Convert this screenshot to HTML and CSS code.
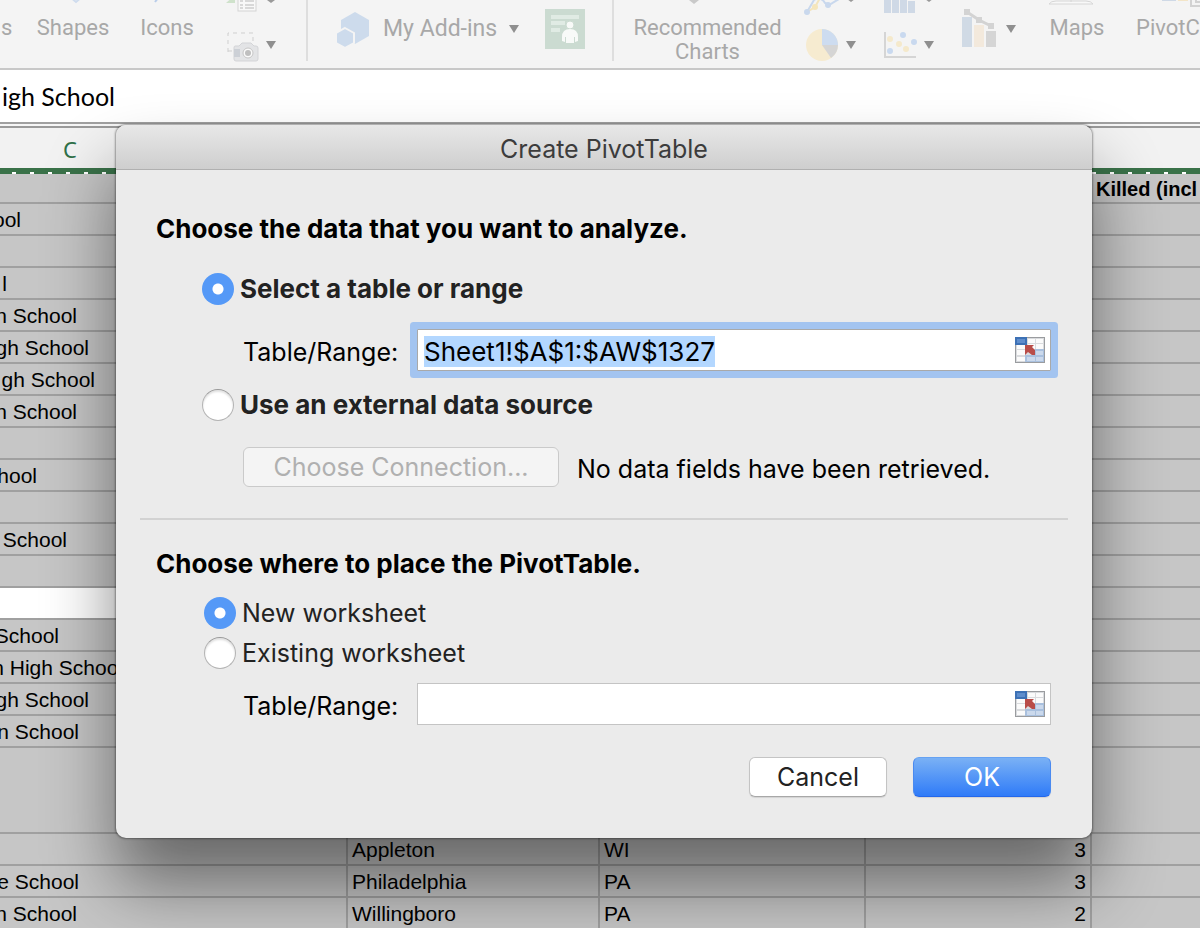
FILE: index.html
```html
<!DOCTYPE html>
<html lang="en">
<head>
<meta charset="utf-8">
<title>Create PivotTable</title>
<link rel="stylesheet" href="styles.css">
</head>
<body>
<svg class="defs" aria-hidden="true">
  <symbol id="picker" viewBox="0 0 30 26">
    <rect width="30" height="26" fill="#9a9c9f"/>
    <rect x="1" y="1" width="28" height="24" fill="#d9dbde"/>
    <path d="M2 8h9v4H2zM2 13h8v5H2zM2 20h8v4H2zM13 2h7v4h-7zM21 2h7v4h-7zM13 7h7v5h-7zM21 7h7v5h-7z" fill="#fbfbfb"/>
    <path d="M20 12h9v13H10v-7h10z" fill="#a9c0de"/>
    <path d="M21 14h7v4h-7zM12 20h8v4h-8zM21 20h7v4h-7z" fill="#cbd9ec"/>
    <rect width="12" height="8" fill="#3d71b5"/>
    <rect x="2" y="2" width="8" height="4" fill="#5e8dcc"/>
    <path d="M10 8h9l-2 2 3 3v5h-3l-4-3-3 3z" fill="#b94d49"/>
  </symbol>
</svg>
<div class="app">
  <header class="ribbon">
    <div class="tool start"><svg class="cap" viewBox="0 0 24 16"></svg>s</div>
    <button class="tool"><svg class="cap" viewBox="0 0 98 16"><path d="M45-4l7 6 7-6" fill="none" stroke="#cfdcee" stroke-width="2"/></svg>Shapes</button>
    <button class="tool"><svg class="cap" viewBox="0 0 90 16"><path d="M36-2l-3 4" stroke="#b9cdea" stroke-width="2"/></svg>Icons</button>
    <div class="shots">
      <svg viewBox="0 0 94 68" width="94" height="68">
        <path d="M14 3l9-8v8z" fill="#cfe2cb"/>
        <rect x="26" y="-8" width="18" height="19" fill="#f8f8f8" stroke="#d4d4d4"/>
        <path d="M28 1h3M28 5h3M28 8h3M33 1h9M33 5h9M33 8h9" stroke="#d8d8d8" stroke-width="2"/>
        <path d="M55 0h8l-4 3z" fill="#999"/>
        <path d="M16 52V33h25v10M16 51h6" fill="none" stroke="#cfcfcf" stroke-width="1" stroke-dasharray="4 4"/>
        <path d="M23 46h4l3-3h9l3 3h2q2 0 2 2v11q0 2-2 2H24q-2 0-2-2V48q0-2 1-2z" fill="#e3e4e6" stroke="#d3d4d7"/>
        <rect x="22" y="49" width="6" height="8" fill="#ccd0d6"/>
        <circle cx="36" cy="53" r="5" fill="#fafafa" stroke="#c6c6c6"/><circle cx="36" cy="53" r="3" fill="#bfbfbf"/>
        <path d="M54 41h10l-5 8z" fill="#8f8f8f"/>
      </svg>
    </div>
    <div class="addins">
      <button class="myaddins">
        <svg viewBox="0 0 34 36" width="34" height="36"><path d="M18 1l14 8v16l-14 8-14-8V9z" fill="#cddbec"/><path d="M8 17l9 5v10l-9 5-9-5V22z" fill="#cddbec" stroke="#f4f4f4" stroke-width="2"/></svg>
        <span>My Add-ins</span>
        <svg viewBox="0 0 10 8" width="10" height="8"><path d="M0 0h10L5 8z" fill="#8f8f8f"/></svg>
      </button>
      <button class="people" aria-label="People Graph">
        <svg viewBox="0 0 40 40" width="40" height="40"><rect width="40" height="40" fill="#cbdbd1"/><path d="M6 8h28M6 14h14M6 21h9" stroke="#e0ebe4" stroke-width="4"/><circle cx="25" cy="16" r="4" fill="#f8faf8" stroke="#cbdbd1"/><path d="M17 32v-4q0-8 8-8t8 8v4l-3 1v-5h-1v6h-8v-6h-1v5z" fill="#f8faf8"/></svg>
      </button>
    </div>
    <button class="tool divided"><svg class="cap" viewBox="0 0 187 16"><path d="M75 0h10l-5 4z" fill="#c9c9c9"/></svg>Recommended<br>Charts</button>
    <div><svg viewBox="0 0 74 68" width="74" height="68">
      <path d="M6 12l8-5 5-9" stroke="#f3e5bd" stroke-width="2" fill="none"/><circle cx="14" cy="7" r="3" fill="#f5e6bc"/>
      <path d="M6 12l7-12q7-4 11 3l4 2 10-6" fill="none" stroke="#c9d8ed" stroke-width="2"/><circle cx="6" cy="12" r="3" fill="#c9d8ed"/><circle cx="27" cy="5" r="3" fill="#c9d8ed"/>
      <path d="M46-1h8l-4 3z" fill="#999"/>
      <circle cx="21" cy="45" r="16" fill="#f6ebd0"/><path d="M21 45V29a16 16 0 0 1 16 16z" fill="#cddcf0"/><path d="M21 45h16a16 16 0 0 1-7 13z" fill="#d5d5d5"/>
      <path d="M45 41h10l-5 8z" fill="#8f8f8f"/></svg></div>
    <div><svg viewBox="0 0 78 68" width="78" height="68">
      <path d="M9 0h7v13H9zM17 0h7v13h-7zM25 0h7v13h-7zM33 1h7v12h-7z" fill="#cfd9e6"/>
      <path d="M50-1h8l-4 3z" fill="#999"/>
      <path d="M10 32v25h31" fill="none" stroke="#d5d5d5" stroke-width="2"/>
      <g fill="#f5e9cb"><circle cx="15" cy="39" r="3"/><circle cx="24" cy="44" r="3"/><circle cx="31" cy="49" r="3"/></g>
      <g fill="#c9d9ef"><circle cx="28" cy="35" r="3"/><circle cx="39" cy="42" r="3"/><circle cx="15" cy="51" r="3"/></g>
      <path d="M49 41h10l-5 8z" fill="#8f8f8f"/></svg></div>
    <div><svg viewBox="0 0 78 68" width="78" height="68">
      <path d="M9 17h10v30H9z" fill="#d0dae5"/><path d="M21 25h10v22H21z" fill="#f3e9dc"/><path d="M33 31h10v16H33z" fill="#d5d5d5"/>
      <path d="M14 12l12 8 12 6" fill="none" stroke="#d3d3d3" stroke-width="3"/><path d="M11 9h6v6h-6zM23 17h6v6h-6zM35 23h6v6h-6z" fill="#d3d3d3"/>
      <path d="M53 25h10l-5 8z" fill="#8f8f8f"/></svg></div>
    <button class="tool"><svg class="cap" viewBox="0 0 92 16"><path d="M18 4q2-3 7-3h30q5 0 7 3zM40-1v3" fill="#f8f8f8" stroke="#d6d6d6"/></svg>Maps</button>
    <button class="tool start last"><svg class="cap" viewBox="0 0 64 16"><path d="M26 0h14v1H26z" fill="#cfd9e6"/><path d="M42 0h10v1H42z" fill="#f3e5c8"/><path d="M55-2v8h9M60-2v4h4" fill="none" stroke="#d2d2d2" stroke-width="2"/></svg>PivotC</button>
  </header>
  <div class="formula">igh School</div>
  <div class="colhead"><span>C</span></div>
  <div class="ants"></div>
  <table class="sheet">
    <colgroup><col class="c1"><col class="c2"><col class="c3"><col class="c4"><col></colgroup>
    <tr class="first"><td colspan="4"></td><th>Killed (incl</th></tr>
    <tr><td colspan="4"><div class="name e20">ool</div></td><td></td></tr>
    <tr><td colspan="4"></td><td></td></tr>
    <tr><td colspan="4"><div class="name e6">l</div></td><td></td></tr>
    <tr><td colspan="4"><div class="name e76">n School</div></td><td></td></tr>
    <tr><td colspan="4"><div class="name e88">gh School</div></td><td></td></tr>
    <tr><td colspan="4"><div class="name e94">gh School</div></td><td></td></tr>
    <tr><td colspan="4"><div class="name e76">n School</div></td><td></td></tr>
    <tr><td colspan="4"></td><td></td></tr>
    <tr><td colspan="4"><div class="name e36">hool</div></td><td></td></tr>
    <tr><td colspan="4"></td><td></td></tr>
    <tr><td colspan="4"><div class="name e66">School</div></td><td></td></tr>
    <tr><td colspan="4"></td><td></td></tr>
    <tr><td colspan="4" class="active"></td><td></td></tr>
    <tr><td colspan="4"><div class="name e58">School</div></td><td></td></tr>
    <tr><td colspan="4"><div class="name e122">n High School</div></td><td></td></tr>
    <tr><td colspan="4"><div class="name e88">gh School</div></td><td></td></tr>
    <tr><td colspan="4"><div class="name e78">n School</div></td><td></td></tr>
    <tr class="tall"><td colspan="4"></td><td></td></tr>
    <tr class="full"><td></td><td>Appleton</td><td>WI</td><td class="num">3</td><td></td></tr>
    <tr class="full"><td><div class="name e78">e School</div></td><td>Philadelphia</td><td>PA</td><td class="num">3</td><td></td></tr>
    <tr class="full"><td><div class="name e76">n School</div></td><td>Willingboro</td><td>PA</td><td class="num">2</td><td></td></tr>
  </table>
</div>

<form class="dialog" role="dialog" aria-labelledby="title">
  <h1 class="titlebar" id="title">Create PivotTable</h1>
  <div class="content">
    <h2>Choose the data that you want to analyze.</h2>
    <label class="option source"><input type="radio" name="source" checked>Select a table or range</label>
    <div class="row range-row">
      <label for="range">Table/Range:</label>
      <div class="field focused"><input id="range" type="text" value="Sheet1!$A$1:$AW$1327" spellcheck="false"><button type="button" aria-label="Pick range"><svg width="30" height="26"><use href="#picker"/></svg></button></div>
    </div>
    <label class="option source second"><input type="radio" name="source">Use an external data source</label>
    <div class="row connection">
      <button type="button" class="choose" disabled>Choose Connection...</button>
      <span>No data fields have been retrieved.</span>
    </div>
    <hr>
    <h2>Choose where to place the PivotTable.</h2>
    <div class="places">
      <label class="option"><input type="radio" name="place" checked>New worksheet</label>
      <label class="option"><input type="radio" name="place">Existing worksheet</label>
    </div>
    <div class="row">
      <label for="target">Table/Range:</label>
      <div class="field"><input id="target" type="text"><button type="button" aria-label="Pick location"><svg width="30" height="26"><use href="#picker"/></svg></button></div>
    </div>
    <div class="actions">
      <button type="button" class="push">Cancel</button>
      <button type="button" class="push primary">OK</button>
    </div>
  </div>
</form>
<script src="script.js"></script>
</body>
</html>
```
FILE: styles.css
```css
* { box-sizing: border-box; }
body { margin: 0; height: 100vh; overflow: hidden; position: relative; font-family: Inter, "Liberation Sans", sans-serif; background: #c6c6c6; }
button { font: inherit; color: inherit; background: none; border: 0; padding: 0; margin: 0; }
svg { display: block; }
.defs { display: none; }
.app { height: 100%; overflow: hidden; }

.ribbon { display: grid; grid-template-columns: 24px 98px 90px 94px 306px 189px 74px 78px 78px 92px 1fr; height: 70px; overflow: hidden; background: #f4f4f4; border-bottom: 2px solid #c8c8c8; color: #a8a8a8; font-family: Roboto, sans-serif; font-size: 22px; line-height: 24px; }
.tool { display: block; text-align: center; white-space: nowrap; align-self: start; }
.cap { width: 100%; height: 16px; }
.divided, .addins { border-left: 2px solid #dedede; height: 61px; }
.start { text-align: left; padding-left: 1px; }
.last { padding-left: 13px; }
.last .cap { width: 64px; }
.addins { display: flex; align-items: center; padding: 0 0 4px 29px; gap: 26px; }
.myaddins { display: flex; align-items: center; gap: 12px; white-space: nowrap; font-size: 23px; }

.formula { height: 54px; line-height: 52px; padding-left: 2px; background: #fff; border-bottom: 2px solid #a0a0a0; font-family: Lato, sans-serif; font-size: 25px; }
.colhead { height: 44px; border-top: 2px solid #f6f6f6; background: #f2f2f2; box-shadow: inset 0 2px #9a9a9a; color: #2f7048; font-family: "Noto Sans", sans-serif; font-size: 22px; line-height: 46px; }
.colhead span { display: block; width: 140px; text-align: center; }
.ants { height: 6px; background: linear-gradient(90deg, transparent 12px, #fff 12px, #fff 16px, transparent 16px) 0 4px / 18px 2px repeat-x #3a7249; }

.sheet { width: 100%; table-layout: fixed; border-collapse: separate; border-spacing: 0; font-family: "Liberation Sans", Arial, sans-serif; font-size: 21px; line-height: 28px; }
.c1 { width: 348px; }
.c2 { width: 252px; }
.c3 { width: 266px; }
.c4 { width: 226px; }
.sheet td, .sheet th { height: 32px; padding: 2px 4px 0; border-bottom: 2px solid #a0a0a0; background: #c6c6c6; white-space: nowrap; overflow: hidden; text-align: left; }
.sheet th { font-size: 20px; line-height: 26px; }
.sheet .first td, .sheet .first th { height: 30px; }
.sheet td:first-child { padding: 2px 0 0; }
.sheet .active { background: #fff; }
.sheet .tall td { height: 86px; }
.full td { border-right: 2px solid #a0a0a0; }
.full td:last-child { border-right: 0; }
.sheet .num { text-align: right; }
.name { display: flex; justify-content: flex-end; overflow: hidden; }
.e6 { width: 7px; }
.e20 { width: 21px; }
.e36 { width: 37px; }
.e58 { width: 59px; }
.e66 { width: 67px; }
.e76 { width: 77px; }
.e78 { width: 79px; }
.e88 { width: 89px; }
.e94 { width: 95px; }
.e122 { width: 123px; }

.dialog { position: absolute; top: 125px; left: 116px; right: 108px; background: #ebebeb; border-radius: 10px; box-shadow: 0 0 2px 1px rgba(0,0,0,.35), 0 46px 70px rgba(0,0,0,.48); font-size: 25px; line-height: 34px; color: #000; }
.titlebar { margin: 0; height: 45px; line-height: 48px; font-size: 25px; font-weight: 400; text-align: center; color: #3c3c3c; background: linear-gradient(#e8e8e8, #cecece); border-bottom: 1px solid #b0b0b0; border-radius: 10px 10px 0 0; }
.content { padding: 42px 41px 41px 40px; }
h2 { margin: 0; font-size: 26px; line-height: 34px; font-weight: 700; }
.option { display: flex; align-items: center; gap: 6px; height: 32px; color: #222; }
.option input { appearance: none; width: 32px; height: 32px; margin: 0; border-radius: 50%; background: #fff; border: 1px solid #b4b4b4; border-top-color: #999; box-shadow: inset 0 2px 2px rgba(0,0,0,.12); }
.option input:checked { border: 0; background: radial-gradient(circle, #fff 5px, #5599f7 6px); box-shadow: none; }
.source { margin: 27px 0 24px 46px; font-size: 26px; font-weight: 700; }
.second { margin: 18px 0 26px 46px; }
.row { display: flex; align-items: center; margin-left: 87px; }
.row > label { width: 174px; padding-top: 3px; }
.field { flex: 1; display: flex; align-items: center; height: 42px; padding: 0 5px 0 6px; background: #fff; border: 1px solid #c4c4c4; }
.field input { flex: 1; min-width: 0; height: 36px; border: 0; padding: 3px 0 0; background: none; font: inherit; font-size: 26px; outline: 0; }
.focused { border-color: #a9a9a9; box-shadow: 0 0 0 7px #a3c4f0; border-radius: 1px; }
::selection { background: #b3d7ff; color: #000; }
.choose { width: 316px; height: 40px; background: #f4f4f4; border: 1px solid #cacaca; border-radius: 6px; color: #b0b0b0; }
.connection { gap: 18px; }
.connection span { padding-top: 3px; white-space: nowrap; }
hr { border: 0; height: 2px; background: #d2d2d2; margin: 31px -17px 27px -16px; }
.places { display: grid; gap: 8px; margin: 16px 0 14px 48px; }
.actions { display: flex; justify-content: flex-end; gap: 26px; margin-top: 32px; }
.push { width: 138px; height: 40px; background: #fff; border: 1px solid #c4c4c4; border-bottom-color: #a8a8a8; border-radius: 6px; box-shadow: 0 1px 1px rgba(0,0,0,.1); color: #222; }
.primary { color: #fff; background: linear-gradient(#7ab1f5, #2f7bf8); border-color: #66a2f2 #4a8af0 #2467ea; }
```
FILE: script.js
```javascript
const range = document.getElementById("range");
range.focus();
range.select();
```
